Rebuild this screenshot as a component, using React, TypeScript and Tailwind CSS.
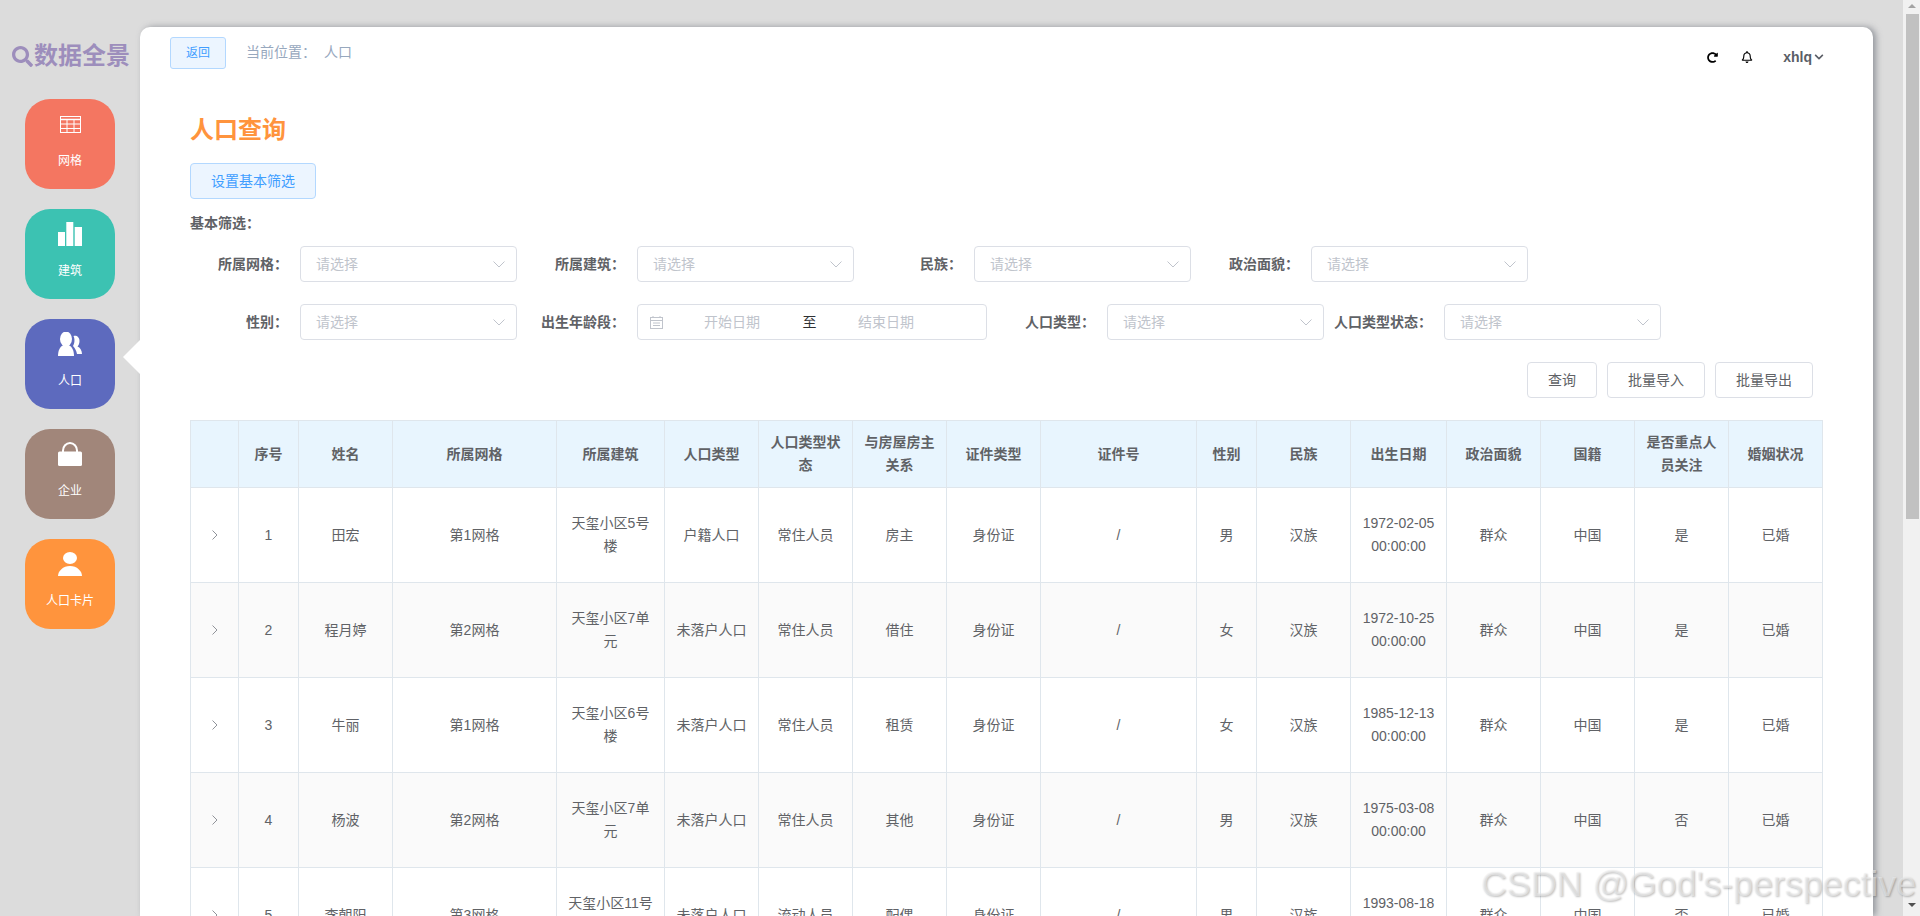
import React from 'react';
import { FaChevronDown, FaRedoAlt, FaRegBell, FaSearch } from 'react-icons/fa';

type Person = {
  name: string;
  grid: string;
  building: string;
  type: string;
  status: string;
  relation: string;
  gender: string;
  birth: string;
  focus: string;
};

const people: Person[] = [
  { name: '田宏', grid: '第1网格', building: '天玺小区5号楼', type: '户籍人口', status: '常住人员', relation: '房主', gender: '男', birth: '1972-02-05 00:00:00', focus: '是' },
  { name: '程月婷', grid: '第2网格', building: '天玺小区7单元', type: '未落户人口', status: '常住人员', relation: '借住', gender: '女', birth: '1972-10-25 00:00:00', focus: '是' },
  { name: '牛丽', grid: '第1网格', building: '天玺小区6号楼', type: '未落户人口', status: '常住人员', relation: '租赁', gender: '女', birth: '1985-12-13 00:00:00', focus: '是' },
  { name: '杨波', grid: '第2网格', building: '天玺小区7单元', type: '未落户人口', status: '常住人员', relation: '其他', gender: '男', birth: '1975-03-08 00:00:00', focus: '否' },
  { name: '李朝阳', grid: '第3网格', building: '天玺小区11号楼', type: '未落户人口', status: '流动人员', relation: '配偶', gender: '男', birth: '1993-08-18 00:00:00', focus: '否' },
];

const columns: { title: string; width: string }[] = [
  { title: '', width: 'w-[48px]' },
  { title: '序号', width: 'w-[60px]' },
  { title: '姓名', width: 'w-[94px]' },
  { title: '所属网格', width: 'w-[164px]' },
  { title: '所属建筑', width: 'w-[108px]' },
  { title: '人口类型', width: 'w-[94px]' },
  { title: '人口类型状态', width: 'w-[94px]' },
  { title: '与房屋房主关系', width: 'w-[94px]' },
  { title: '证件类型', width: 'w-[94px]' },
  { title: '证件号', width: 'w-[156px]' },
  { title: '性别', width: 'w-[60px]' },
  { title: '民族', width: 'w-[94px]' },
  { title: '出生日期', width: 'w-[96px]' },
  { title: '政治面貌', width: 'w-[94px]' },
  { title: '国籍', width: 'w-[94px]' },
  { title: '是否重点人员关注', width: 'w-[94px]' },
  { title: '婚姻状况', width: 'w-[94px]' },
];

const GridIcon = () => (
  <svg width="21" height="17" viewBox="0 0 21 17" fill="none" stroke="white" strokeWidth="1">
    <rect x="0.5" y="0.5" width="20" height="16" />
    <path d="M0 3.500h21" strokeWidth="1.500" />
    <path d="M0 8h21M0 12.500h21M7 4v13M14 4v13" />
  </svg>
);

const BarsIcon = () => (
  <svg width="24" height="24" viewBox="0 0 24 24" fill="white">
    <rect x="0" y="10" width="7" height="14" />
    <rect x="8.3" y="0" width="7" height="24" />
    <rect x="16.7" y="5" width="7.3" height="19" />
  </svg>
);

const UsersIcon = () => (
  <svg width="24" height="24" viewBox="0 0 24 24" fill="white">
    <ellipse cx="8" cy="7" rx="6" ry="7.500" />
    <path d="M0 24c0-5 1.500-9 5.500-11h5c4 2 5.500 6 5.500 11z" />
    <path d="M15.500 4c3-1 6 1 6 5 0 2.500-.8 4.500-2 5.500 2.500 1 4.500 4 4.500 7.500h-5c-.5-3-2-6-4-8 1.500-2.500 2.200-6.500.5-10z" />
  </svg>
);

const LockIcon = () => (
  <svg width="24" height="24" viewBox="0 0 24 24">
    <path d="M5 11V8.500A7 7.500 0 0 1 19 8.500V11" fill="none" stroke="white" strokeWidth="2" />
    <rect x="0" y="9.500" width="24" height="14.500" rx="1.500" fill="white" />
  </svg>
);

const UserIcon = () => (
  <svg width="24" height="24" viewBox="0 0 24 24" fill="white">
    <ellipse cx="12" cy="6" rx="7" ry="6" />
    <path d="M0 24c0-5 5-10 12-10s12 5 12 10z" />
  </svg>
);

const navItems = [
  { label: '网格', bg: 'bg-[#f47661]', icon: <GridIcon />, active: false },
  { label: '建筑', bg: 'bg-[#3cc2b2]', icon: <BarsIcon />, active: false },
  { label: '人口', bg: 'bg-[#5d6abe]', icon: <UsersIcon />, active: true },
  { label: '企业', bg: 'bg-[#a1867a]', icon: <LockIcon />, active: false },
  { label: '人口卡片', bg: 'bg-[#ff943d]', icon: <UserIcon />, active: false },
];

const Arrow = () => (
  <svg width="12" height="7" viewBox="0 0 12 7" fill="none" stroke="#c0c4cc" strokeWidth="1">
    <path d="M0.500 0.500L6 6L11.500 0.500" />
  </svg>
);

const Select = () => (
  <div className="flex h-[36px] flex-1 items-center justify-between rounded border border-[#dcdfe6] bg-white pl-[15px] pr-[11px] text-[14px] text-[#c0c4cc]">
    <span>请选择</span>
    <Arrow />
  </div>
);

const FormItem = ({ label, width, children }: { label: string; width: string; children: React.ReactNode }) => (
  <div className={`flex items-center ${width}`}>
    <label className="w-[110px] shrink-0 whitespace-nowrap pr-[12px] text-right text-[14px] font-bold text-[#606266]">{label}</label>
    {children}
  </div>
);

const DateRange = () => (
  <div className="flex h-[36px] flex-1 items-center rounded border border-[#dcdfe6] text-[14px] text-[#c0c4cc]">
    <svg className="ml-[12px] mr-[4px] shrink-0" width="13" height="13" viewBox="0 0 13 13" fill="none" stroke="#c0c4cc" strokeWidth="1">
      <rect x="0.500" y="1.500" width="12" height="11" />
      <path d="M0.500 4.500h12M3 0v2M10 0v2M3 7h7M3 9.500h7" />
    </svg>
    <span className="w-[130px] text-center">开始日期</span>
    <span className="w-[25px] text-center text-[#303133]">至</span>
    <span className="w-[128px] text-center">结束日期</span>
  </div>
);

const OutlineButton = ({ children, width }: { children: React.ReactNode; width: string }) => (
  <button className={`h-[36px] rounded border border-[#dcdfe6] bg-white text-[14px] text-[#606266] ${width}`}>{children}</button>
);

const cell = 'border border-[#dfe6ec] px-[10px] text-center align-middle';

export default function App() {
  return (
    <div className="relative flex h-[916px] w-[1920px] overflow-hidden bg-[#dcdcdc] font-['Liberation_Sans','Noto_Sans_CJK_SC',sans-serif]">
      <aside className="w-[140px] shrink-0 pt-[40px]">
        <div className="flex h-[32px] items-center pl-[12px] text-[#9d8ebc]">
          <FaSearch size={21} />
          <span className="ml-[1px] whitespace-nowrap text-[24px] font-bold leading-[32px]">数据全景</span>
        </div>
        <nav className="ml-[25px] mt-[27px] flex flex-col gap-[20px]">
          {navItems.map((item) => (
            <div key={item.label} className={`relative flex h-[90px] w-[90px] flex-col items-center rounded-[25px] pt-[13px] text-white ${item.bg}`}>
              <div className="flex h-[24px] items-center">{item.icon}</div>
              <span className="mt-[16px] text-[12px] leading-[18px]">{item.label}</span>
              {item.active && (
                <div className="absolute left-[98px] top-[21px] h-0 w-0 border-y-[17.5px] border-r-[17px] border-y-transparent border-r-white" />
              )}
            </div>
          ))}
        </nav>
      </aside>

      <main className="mt-[27px] w-[1733px] shrink-0 rounded-t-[10px] bg-white shadow-[3px_0px_6px_rgba(100,105,115,0.6)]">
        <div className="flex items-start justify-between pl-[30px] pr-[49px] pt-[10px]">
          <div className="flex items-center">
            <button className="h-[32px] w-[56px] rounded-[3px] border border-[#b3d8ff] bg-[#ecf5ff] text-[12px] text-[#409eff]">返回</button>
            <span className="mb-[2px] ml-[20px] text-[14px] text-[#97a8be]">当前位置：</span>
            <span className="mb-[2px] ml-[8px] text-[14px] text-[#97a8be]">人口</span>
          </div>
          <div className="mt-[10px] flex items-center">
            <FaRedoAlt size={11} className="text-black" />
            <FaRegBell size={12} className="ml-[23px] text-black" />
            <span className="ml-[30px] text-[14px] font-bold leading-[20px] text-[#5a5e66]">xhlq</span>
            <FaChevronDown size={10} className="ml-[2px] text-[#5a5e66]" />
          </div>
        </div>

        <div className="pl-[50px]">
          <h1 className="mt-[45px] text-[24px] font-bold leading-[32px] text-[#ff943d]">人口查询</h1>
          <button className="mt-[17px] h-[36px] w-[126px] rounded border border-[#b3d8ff] bg-[#ecf5ff] text-[14px] text-[#409eff]">设置基本筛选</button>
          <div className="mt-[14px] text-[14px] font-bold leading-[20px] text-[#606266]">基本筛选：</div>

          <div className="mt-[13px] flex gap-[10px]">
            <FormItem label="所属网格：" width="w-[327px]"><Select /></FormItem>
            <FormItem label="所属建筑：" width="w-[327px]"><Select /></FormItem>
            <FormItem label="民族：" width="w-[327px]"><Select /></FormItem>
            <FormItem label="政治面貌：" width="w-[327px]"><Select /></FormItem>
          </div>
          <div className="mt-[22px] flex gap-[10px]">
            <FormItem label="性别：" width="w-[327px]"><Select /></FormItem>
            <FormItem label="出生年龄段：" width="w-[460px]"><DateRange /></FormItem>
            <FormItem label="人口类型：" width="w-[327px]"><Select /></FormItem>
            <FormItem label="人口类型状态：" width="w-[327px]"><Select /></FormItem>
          </div>

          <div className="mt-[22px] flex w-[1623px] justify-end gap-[10px]">
            <OutlineButton width="w-[70px]">查询</OutlineButton>
            <OutlineButton width="w-[98px]">批量导入</OutlineButton>
            <OutlineButton width="w-[98px]">批量导出</OutlineButton>
          </div>

          <table className="mt-[22px] w-[1633px] table-fixed border-collapse text-[14px] leading-[23px] text-[#606266]">
            <colgroup>
              {columns.map((col, idx) => (
                <col key={idx} className={col.width} />
              ))}
            </colgroup>
            <thead>
              <tr className="h-[67px] bg-[#e8f5fe]">
                {columns.map((col, idx) => (
                  <th key={idx} className={`${cell} font-bold`}>{col.title}</th>
                ))}
              </tr>
            </thead>
            <tbody>
              {people.map((p, idx) => (
                <tr key={idx} className={`h-[95px] ${idx % 2 === 1 ? 'bg-[#fafafa]' : 'bg-white'}`}>
                  <td className={cell}>
                    <svg className="mx-auto" width="6" height="10" viewBox="0 0 6 10" fill="none" stroke="#909399" strokeWidth="1">
                      <path d="M0.500 0.500L5 5L0.500 9.500" />
                    </svg>
                  </td>
                  <td className={cell}>{idx + 1}</td>
                  <td className={cell}>{p.name}</td>
                  <td className={cell}>{p.grid}</td>
                  <td className={cell}>{p.building}</td>
                  <td className={cell}>{p.type}</td>
                  <td className={cell}>{p.status}</td>
                  <td className={cell}>{p.relation}</td>
                  <td className={cell}>身份证</td>
                  <td className={cell}>/</td>
                  <td className={cell}>{p.gender}</td>
                  <td className={cell}>汉族</td>
                  <td className={cell}>{p.birth}</td>
                  <td className={cell}>群众</td>
                  <td className={cell}>中国</td>
                  <td className={cell}>{p.focus}</td>
                  <td className={cell}>已婚</td>
                </tr>
              ))}
            </tbody>
          </table>
        </div>
      </main>

      <div className="ml-[30px] flex h-[916px] w-[17px] shrink-0 flex-col items-center bg-[#f1f1f1]">
        <div className="mt-[4px] h-0 w-0 border-x-[4px] border-b-[4px] border-x-transparent border-b-[#a3a3a3]" />
        <div className="ml-[2px] mt-[6px] h-[505px] w-[13px] bg-[#c1c1c1]" />
        <div className="mt-[384px] h-0 w-0 border-x-[4px] border-t-[4px] border-x-transparent border-t-[#505050]" />
      </div>

      <div className="pointer-events-none absolute left-[1481px] top-[863px] whitespace-nowrap text-[35.8px] leading-[42px] text-[rgba(240,240,240,0.55)] [text-shadow:1px_1px_2px_rgba(0,0,0,0.25)]">
        CSDN @God's-perspective
      </div>
    </div>
  );
}
